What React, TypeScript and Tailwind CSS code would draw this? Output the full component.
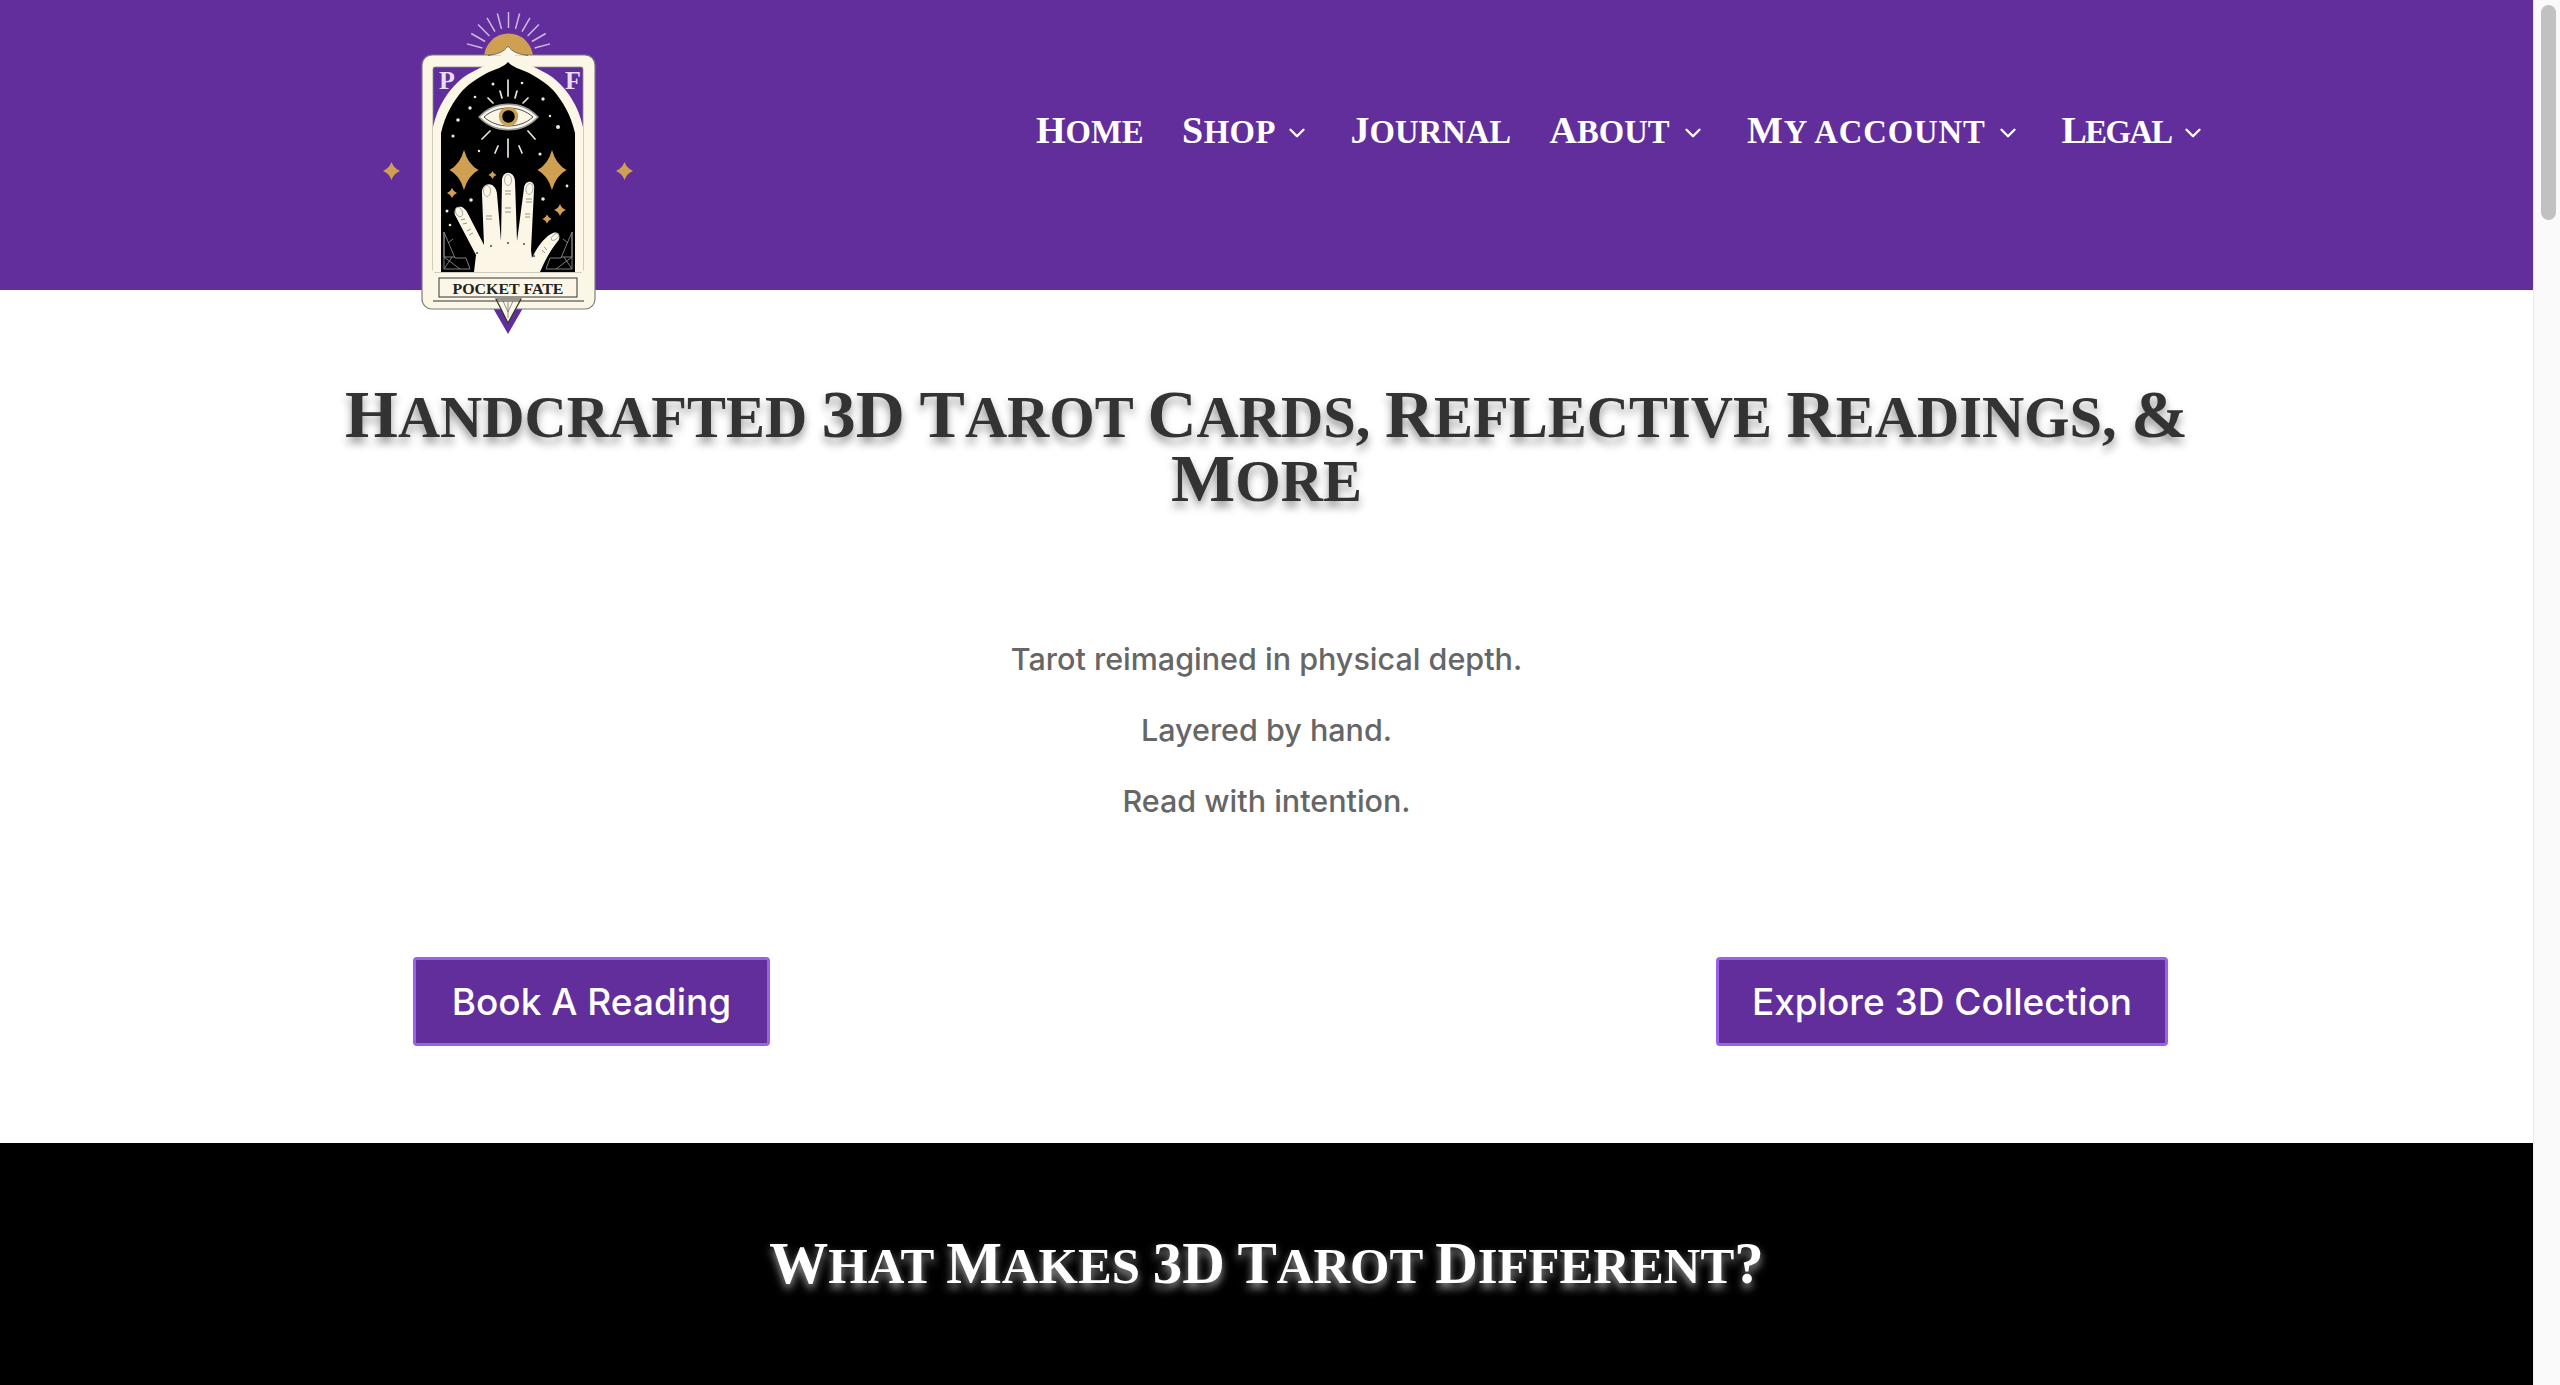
import React from 'react';
import { ChevronDown } from 'lucide-react';

const navItems = [
  { label: 'Home', menu: false, width: 'w-[105px]', spacing: 'tracking-[0px]' },
  { label: 'Shop', menu: true, width: 'w-[92px]', spacing: 'tracking-[0.5px]' },
  { label: 'Journal', menu: false, width: 'w-[158px]', spacing: 'tracking-[0px]' },
  { label: 'About', menu: true, width: 'w-[121px]', spacing: 'tracking-[0px]' },
  { label: 'My account', menu: true, width: 'w-[238px]', spacing: 'tracking-[0.9px]' },
  { label: 'Legal', menu: true, width: 'w-[109px]', spacing: 'tracking-[-1.6px]' },
];

// Capitals and digits stay full size, lower case turns into small capitals
function SmallCaps({ text }: { text: string }) {
  const parts = text.match(/[A-Z0-9&?]+|[^A-Z0-9&?]+/g) ?? [];
  return (
    <>
      {parts.map((part, i) =>
        /^[A-Z0-9&?]/.test(part) ? (
          <span key={i}>{part}</span>
        ) : (
          <span key={i} className="text-[0.86em] uppercase">{part}</span>
        )
      )}
    </>
  );
}

function Sparkle({ x, y, rx, ry }: { x: number; y: number; rx: number; ry: number }) {
  const kx = rx * 0.28;
  const ky = ry * 0.28;
  return (
    <path
      fill="#cf9f52"
      d={`M${x} ${y - ry}Q${x + kx} ${y - ky} ${x + rx} ${y}Q${x + kx} ${y + ky} ${x} ${y + ry}Q${x - kx} ${y + ky} ${x - rx} ${y}Q${x - kx} ${y - ky} ${x} ${y - ry}Z`}
    />
  );
}

const dots = [
  [133, 84, 1.5], [162, 83, 1.3], [115, 97, 1.3], [183, 99, 1.7], [110, 108, 1.7], [190, 116, 1.2],
  [98, 120, 1.8], [198, 127, 2], [93, 136, 1.6], [119, 151, 1.2], [180, 154, 1.6], [207, 186, 1.4],
  [111, 200, 1.8], [183, 199, 1.8], [87, 211, 1.5], [90, 225, 1.3],
];

function Logo() {
  return (
    <svg viewBox="0 0 300 345" className="w-[300px] h-[345px]">
      {/* sun and rays */}
      <path d="M124 58A24.5 24.5 0 0 1 173 58Z" fill="#cf9f52" />
      {[-75, -60, -45, -30, -15, 0, 15, 30, 45, 60, 75].map((a) => (
        <line key={a} x1="148.5" y1="28" x2="148.5" y2="12" stroke="#cbbbdf" strokeWidth="1.5" transform={`rotate(${a} 148.5 55)`} />
      ))}
      <Sparkle x={31.5} y={171} rx={8.5} ry={9} />
      <Sparkle x={264.5} y={171} rx={8.5} ry={9} />

      {/* bottom point */}
      <path d="M133 308H163L148 334Z" fill="#5f2e9c" />
      {/* card */}
      <rect x="62" y="55" width="173" height="254" rx="10" fill="#fbf6e6" stroke="#7d7d7d" strokeWidth="1.2" />
      <path d="M136 299H161L148 323Z" fill="#fbf6e6" stroke="#333" strokeWidth="1.2" />
      <path d="M148 302V318M143 301L148 312L153 301" stroke="#777" strokeWidth="0.8" fill="none" />
      <path d="M73 301H224" stroke="#333" strokeWidth="1" />
      <rect x="73" y="67" width="150" height="205" rx="2" fill="#5f2e9c" stroke="#8d8d8d" strokeWidth="0.8" />
      <path d="M73 272V127C78 105 88 92 97 83C105 75 112 72 120 68C132 62 142 58 148 46C154 58 164 62 176 68C184 72 191 75 199 83C208 92 218 105 223 127V272Z" fill="#fbf6e6" />
      <path d="M128 55.5C138 54 144 52 148 46C152 52 158 54 168 55.5" fill="#fbf6e6" stroke="#666" strokeWidth="0.9" strokeLinejoin="round" />
      <path d="M81 272V133C85 115 94 100 103 90C110 83 118 78 127 73C136 69 144 67 148 62C152 67 160 69 169 73C178 78 186 83 193 90C202 100 211 115 215 133V272Z" fill="#000" />
      <text x="87" y="89" textAnchor="middle" fontFamily="'Liberation Serif', serif" fontWeight="700" fontSize="26" fill="#e6dff0">P</text>
      <text x="213" y="89" textAnchor="middle" fontFamily="'Liberation Serif', serif" fontWeight="700" fontSize="26" fill="#e6dff0">F</text>

      {/* eye */}
      <path d="M119 117C135 100 162 100 178 117C162 134 135 134 119 117Z" fill="#fbf6e6" stroke="#9a9a9a" strokeWidth="1.4" />
      <path d="M124 117C137 105 160 105 173 117C160 129 137 129 124 117Z" fill="#fbf6e6" stroke="#222" strokeWidth="0.8" />
      <circle cx="148.5" cy="116.5" r="8" fill="#000" stroke="#cf9f52" strokeWidth="3.5" />
      <g stroke="#e8e2d2" strokeWidth="1.7" strokeLinecap="round">
        <path d="M148 80V96M140 91L142 98M157 91L155 98M128 98L133 103M168 98L163 103M130 131L122 139M168 131L175 139M148 139V157M138 146L135 153M159 146L162 153" fill="none" />
      </g>
      {dots.map(([x, y, r], i) => (
        <circle key={i} cx={x} cy={y} r={r} fill="#efe9d8" />
      ))}

      <Sparkle x={104} y={170} rx={14.5} ry={20} />
      <Sparkle x={192} y={170} rx={14.5} ry={20} />
      <Sparkle x={132.5} y={175} rx={4} ry={4} />
      <Sparkle x={92} y={193} rx={5} ry={5} />
      <Sparkle x={200} y={210} rx={6} ry={6} />
      <Sparkle x={187} y={219} rx={4.5} ry={4.5} />

      {/* hand */}
      <path
        d="M114 272L116 255L95 215C93 209 98 206 102 207C104 208 106 210 107 212L124 245L122 194C121 181 136 181 137 194L141 241L142 181C142 170 154 170 155 181L157 241L164 188C165 179 176 180 174 190L171 250L172 258C178 245 186 236 193 233C199 231 201 237 198 241C192 248 186 258 180 272Z"
        fill="#fbf6e6"
      />
      <g fill="#fbf6e6" stroke="#9a9a9a" strokeWidth="0.8">
        <ellipse cx="99" cy="212" rx="3.3" ry="5" transform="rotate(-25 99 212)" />
        <ellipse cx="127" cy="191" rx="3.5" ry="5.5" />
        <ellipse cx="148" cy="180" rx="3.5" ry="5.5" />
        <ellipse cx="169.5" cy="189" rx="3.5" ry="5.5" transform="rotate(8 169.5 189)" />
        <ellipse cx="195" cy="237" rx="2.5" ry="4.5" transform="rotate(50 195 237)" />
      </g>
      <g stroke="#888" strokeWidth="0.9" fill="none">
        <path d="M101 220L105 219M103 224L107 223M107 231L111 229M109 235L113 233M126 216H132M126 219H132M145 191H151M145 194H151M145 208H151M145 212H151M166 199H172M166 202H172M165 214H170M165 217H170M184 247L187 250M182 250L185 253" />
      </g>
      <g fill="#555">
        <circle cx="117" cy="253" r="1.1" /><circle cx="131" cy="246" r="1.1" /><circle cx="148" cy="243" r="1.1" /><circle cx="164" cy="244" r="1.1" /><circle cx="174" cy="256" r="1.1" />
      </g>

      {/* corner crystals */}
      <g stroke="#8a8a8a" strokeWidth="0.9" fill="none">
        <path d="M84 232L95 258H106L110 269H84ZM84 232V257H95M84 257L100 269M92 257L84 269M88 243L93 239" />
        <path d="M212 232L206 246L201 258H190L186 269H212ZM212 232V257H201M212 257L196 269M204 257L212 269M208 243L203 239" />
      </g>

      {/* name plate */}
      <rect x="79" y="278" width="138" height="19" fill="#fbf6e6" stroke="#333" strokeWidth="1" />
      <text x="148" y="293.5" textAnchor="middle" textLength="111" lengthAdjust="spacingAndGlyphs" fontFamily="'Liberation Serif', serif" fontWeight="700" fontSize="15.5" fill="#222">POCKET FATE</text>
    </svg>
  );
}

export default function App() {
  return (
    <div className="flex h-[1385px] w-[2560px] overflow-hidden bg-white">
      <div className="flex-1 min-w-0">
        <header className="relative h-[290px] bg-[#612e9c]">
          <div className="absolute left-[360px] top-0 z-10">
            <Logo />
          </div>
          <nav className="flex justify-end gap-[41px] pr-[327px] pt-[106px] font-['Liberation_Serif',serif] text-[38px] font-bold leading-[48px] text-white">
            {navItems.map((item) => (
              <a key={item.label} className="flex items-center">
                <span className={`${item.width} ${item.spacing} whitespace-nowrap`}>
                  <SmallCaps text={item.label} />
                </span>
                {item.menu && <ChevronDown className="ml-[9.5px] mt-[3px] h-[26px] w-[26px]" strokeWidth={2.2} />}
              </a>
            ))}
          </nav>
        </header>

        <main className="h-[853px] pt-[94px]">
          <h1 className="mx-auto w-[1900px] text-center font-['Liberation_Serif',serif] text-[68px] font-bold leading-[61px] text-[#333333] [text-shadow:0_6px_8px_rgba(0,0,0,0.4)]">
            <SmallCaps text="Handcrafted 3D Tarot Cards, Reflective Readings, & More" />
          </h1>
          <div className="mt-[129px] flex flex-col gap-[36px] text-center font-['Inter',sans-serif] text-[30.5px] font-medium leading-[35px] text-[#666666]">
            <p>Tarot reimagined in physical depth.</p>
            <p>Layered by hand.</p>
            <p>Read with intention.</p>
          </div>
          <div className="mt-[139px] flex justify-between pl-[413px] pr-[365px] font-['Inter',sans-serif] text-[37px] font-medium text-white">
            <a className="flex h-[89px] w-[357px] items-center justify-center rounded-[4px] border-[3px] border-[#9b60e8] bg-[#612e9c]">Book A Reading</a>
            <a className="flex h-[89px] w-[452px] items-center justify-center rounded-[4px] border-[3px] border-[#9b60e8] bg-[#612e9c]">Explore 3D Collection</a>
          </div>
        </main>

        <section className="h-[242px] bg-black pt-[84px] text-center">
          <h2 className="font-['Liberation_Serif',serif] text-[59px] font-bold leading-[72px] text-white [text-shadow:0_5px_8px_rgba(255,255,255,0.6)]">
            <SmallCaps text="What Makes 3D Tarot Different?" />
          </h2>
        </section>
      </div>

      {/* browser scrollbar */}
      <aside className="w-[27px] shrink-0 border-l border-[#ececec] bg-[#fafafa] pl-[7px] pt-[5px]">
        <div className="h-[215px] w-[15px] rounded-full bg-[#c1c1c1]" />
      </aside>
    </div>
  );
}
